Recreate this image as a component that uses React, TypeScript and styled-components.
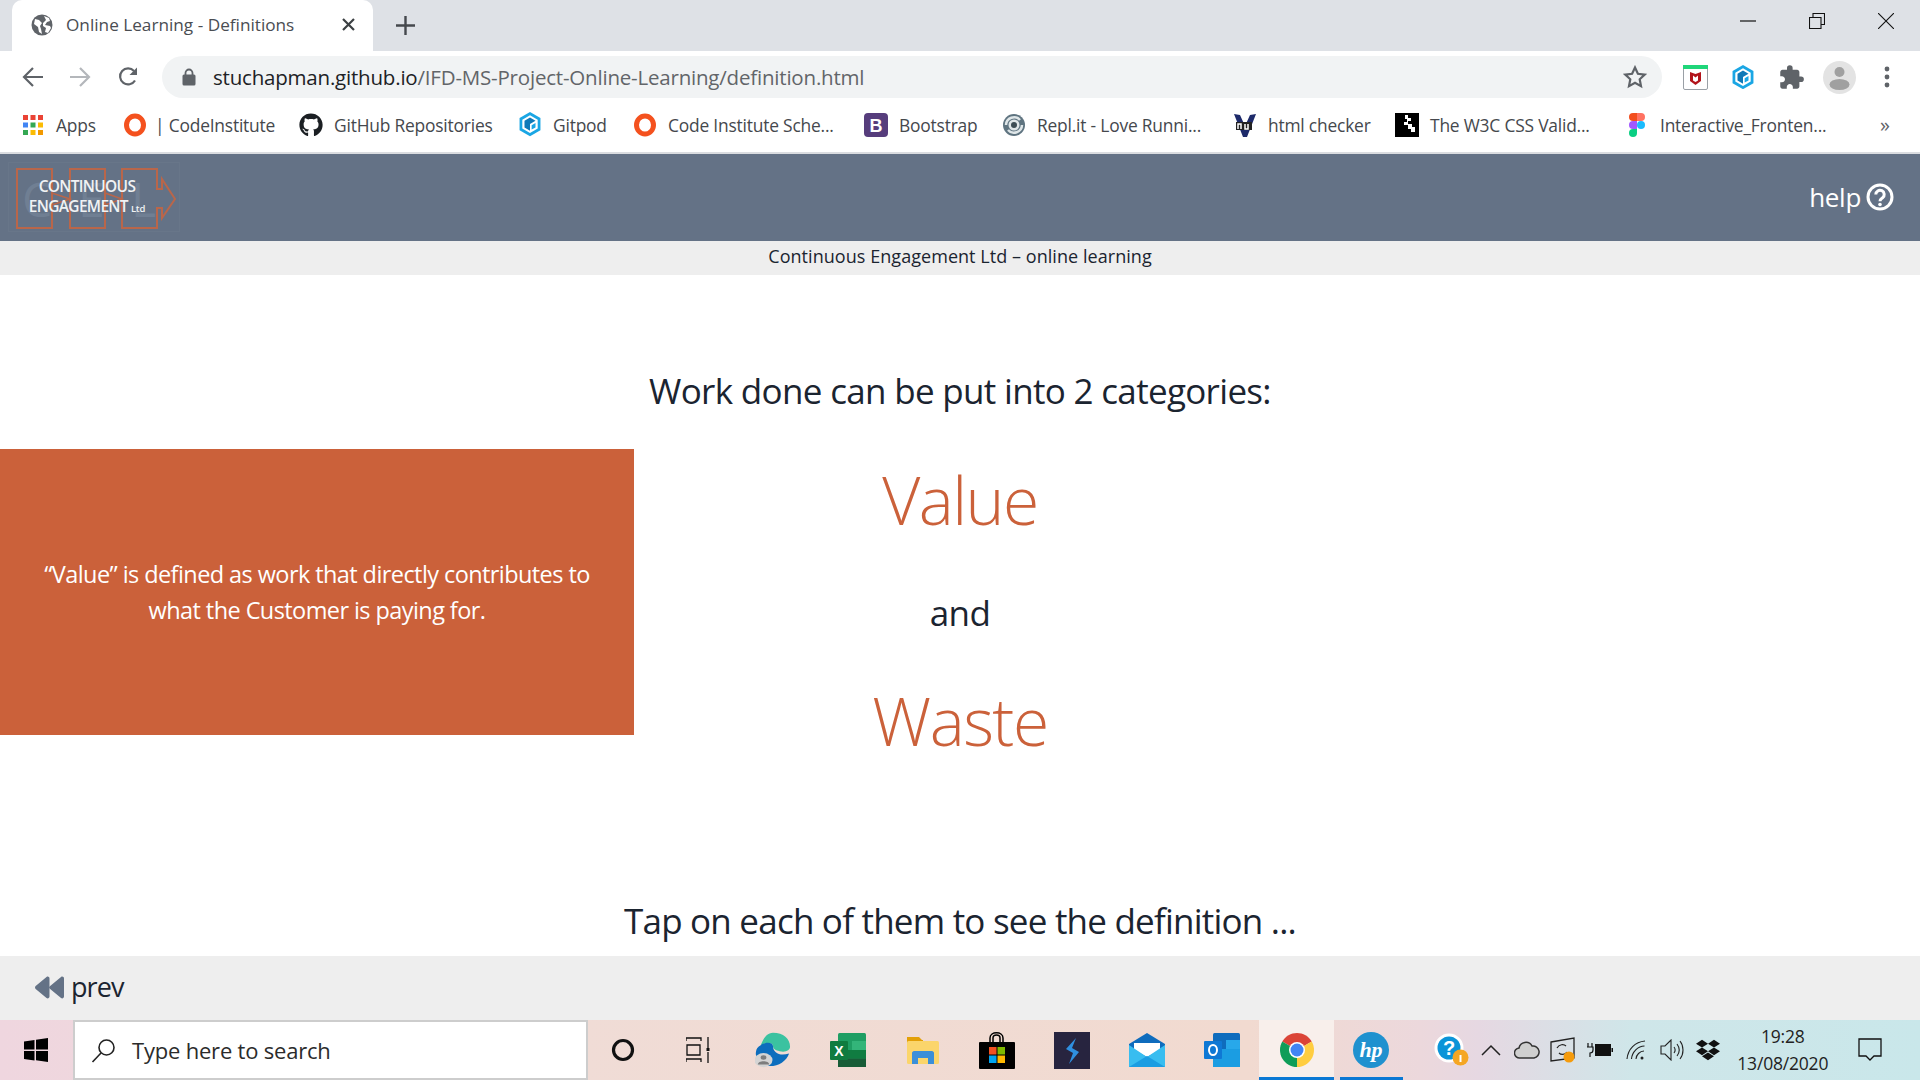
import React from 'react';
import styled, { createGlobalStyle } from 'styled-components';
import { FaGithub, FaBackward, FaDropbox } from 'react-icons/fa';
import { MdExtension } from 'react-icons/md';

const GlobalStyle = createGlobalStyle`
  html, body { margin: 0; padding: 0; overflow: hidden; background: #fff; }
  * { box-sizing: border-box; }
  svg { flex: none; }
`;

const Screen = styled.div`
  width: 1920px;
  height: 1080px;
  display: flex;
  flex-direction: column;
  font-family: 'Open Sans', 'Liberation Sans', sans-serif;
  color: #1b2430;
`;

const TabStrip = styled.div`
  height: 51px;
  flex: none;
  display: flex;
  background: #dee1e6;
  padding-left: 12px;
`;

const Tab = styled.div`
  width: 361px;
  height: 51px;
  background: #fff;
  border-radius: 10px 10px 0 0;
  display: flex;
  align-items: center;
  padding: 0 18px 2px 19px;
  font-size: 17.2px;
  color: #4a4d52;
`;

const TabTitle = styled.span`
  margin-left: 13px;
  flex: 1;
`;

const NewTab = styled.div`
  width: 64px;
  display: flex;
  align-items: center;
  justify-content: center;
  color: #45484d;
`;

const WindowButtons = styled.div`
  margin-left: auto;
  display: flex;
  height: 51px;
`;

const WindowButton = styled.div`
  width: 69px;
  display: flex;
  align-items: center;
  justify-content: center;
  padding-bottom: 9px;
`;

const Toolbar = styled.div`
  height: 52px;
  flex: none;
  display: flex;
  align-items: center;
  background: #fff;
  padding-left: 8px;
`;

const NavButton = styled.div`
  width: 48px;
  display: flex;
  justify-content: center;
`;

const Omnibox = styled.div`
  width: 1500px;
  height: 42px;
  margin-left: 10px;
  border-radius: 21px;
  background: #f1f3f4;
  display: flex;
  align-items: center;
  padding: 0 15px 0 20px;
`;

const Url = styled.div`
  margin-left: 17px;
  flex: 1;
  font-size: 20.5px;
  letter-spacing: -0.2px;
  color: #626569;
  white-space: nowrap;
  b { font-weight: 400; color: #202124; }
`;

const Extensions = styled.div`
  display: flex;
  align-items: center;
  padding-left: 9px;
`;

const Extension = styled.div`
  width: 48px;
  display: flex;
  justify-content: center;
  color: #5f6368;
`;

const Bookmarks = styled.div`
  height: 51px;
  flex: none;
  display: flex;
  align-items: center;
  background: #fff;
  padding: 0 0 6px 23px;
  border-bottom: 2px solid #dadce0;
`;

const Bookmark = styled.div<{ $w: number; $gap: number }>`
  width: ${({ $w }) => $w}px;
  flex: none;
  display: flex;
  align-items: center;
  gap: ${({ $gap }) => $gap}px;
  font-size: 17.4px;
  letter-spacing: -0.2px;
  color: #45484d;
  white-space: nowrap;
`;

const FavSlot = styled.span`
  width: 20px;
  height: 24px;
  display: flex;
  align-items: center;
  justify-content: center;
  flex: none;
`;

const MoreBookmarks = styled.span`
  margin-left: auto;
  margin-right: 30px;
  font-size: 20px;
  color: #5f6368;
`;

const Header = styled.header`
  height: 87px;
  flex: none;
  display: flex;
  align-items: center;
  justify-content: space-between;
  background: #647286;
  padding: 0 26px 0 8px;
`;

const Logo = styled.div`
  position: relative;
  width: 172px;
  height: 70px;
  margin-top: -1px;
  border: 1px solid #687689;
`;

const LogoLines = styled.div`
  position: absolute;
  inset: 0;
  display: flex;
  flex-direction: column;
  align-items: center;
  justify-content: center;
  padding-right: 14px;
  color: #f0f2f4;
  font-size: 15.5px;
  line-height: 20px;
  font-weight: 600;
  letter-spacing: -0.7px;
  white-space: nowrap;
  small { font-size: 9.5px; letter-spacing: -0.2px; margin-left: 3px; }
`;

const Help = styled.div`
  display: flex;
  align-items: center;
  gap: 5px;
  padding-bottom: 2px;
  color: #fff;
  font-size: 26px;
  letter-spacing: -0.3px;
`;

const SubHeader = styled.div`
  height: 34px;
  flex: none;
  background: #eeeeee;
  text-align: center;
  font-size: 18px;
  line-height: 31px;
  letter-spacing: 0.05px;
`;

const Main = styled.main`
  flex: 1;
  background: #fff;
  padding-top: 90px;
  display: flex;
  flex-direction: column;
`;

const Lead = styled.div`
  text-align: center;
  font-size: 35px;
  line-height: 52px;
  letter-spacing: -0.68px;
`;

const DefinitionRow = styled.div`
  margin-top: 32px;
  display: grid;
  grid-template-columns: 634px 1fr 634px;
  align-items: start;
`;

const DefinitionPanel = styled.div`
  height: 286px;
  background: #cb613a;
  color: #fff;
  display: flex;
  align-items: center;
  justify-content: center;
  text-align: center;
  padding: 0 30px 1px;
  font-size: 23.5px;
  line-height: 36px;
  letter-spacing: -0.58px;
`;

const Terms = styled.div`
  display: flex;
  flex-direction: column;
  align-items: center;
  padding-top: 2px;
`;

const Term = styled.div`
  font-size: 66px;
  line-height: 96px;
  font-weight: 350;
  letter-spacing: -1.5px;
  color: #cb613a;
`;

const Joiner = styled.div`
  font-size: 35px;
  line-height: 52px;
  letter-spacing: -0.6px;
  margin: 40px 0 33px;
`;

const Prompt = styled(Lead)`
  margin-top: 127px;
  letter-spacing: -0.78px;
`;

const Footer = styled.footer`
  height: 64px;
  flex: none;
  background: #eeeeee;
  display: flex;
  align-items: center;
  gap: 7px;
  padding: 0 0 2px 35px;
  font-size: 27px;
  letter-spacing: -0.9px;
  color: #647286;
  span { color: #1b2430; padding-bottom: 2px; }
`;

const Taskbar = styled.div`
  height: 60px;
  flex: none;
  display: flex;
  align-items: center;
  background: linear-gradient(90deg, #efd6df 0%, #f0dcd6 30%, #f1dad0 65%, #ecd8dc 74%, #e6d8e2 77%, #cfe6e9 85%, #c9e7ea 100%);
`;

const StartButton = styled.div`
  width: 73px;
  flex: none;
  display: flex;
  justify-content: center;
  padding-right: 2px;
`;

const SearchBox = styled.div`
  width: 515px;
  height: 60px;
  flex: none;
  background: #fff;
  border: 2px solid #cdcdcd;
  display: flex;
  align-items: center;
  padding-left: 16px;
  gap: 16px;
  font-size: 22px;
  letter-spacing: -0.2px;
  color: #2b2b2b;
`;

const TaskApps = styled.div`
  display: flex;
  flex: none;
  margin-left: -2px;
`;

const TaskSlot = styled.div<{ $active?: boolean; $open?: boolean; $inset: number }>`
  position: relative;
  width: 74.8px;
  height: 60px;
  flex: none;
  display: flex;
  align-items: center;
  justify-content: center;
  background: ${({ $active }) => ($active ? '#f8efeb' : 'transparent')};

  &::after {
    content: '';
    position: absolute;
    left: ${({ $inset }) => $inset}px;
    right: ${({ $inset }) => $inset}px;
    bottom: 0;
    height: 3px;
    background: ${({ $open }) => ($open ? '#0a78d4' : 'transparent')};
  }
`;

const Tray = styled.div`
  flex: 1;
  height: 60px;
  padding-left: 22px;
  display: flex;
  align-items: center;
`;

const TraySlot = styled.div<{ $w: number }>`
  width: ${({ $w }) => $w}px;
  flex: none;
  display: flex;
  justify-content: center;
`;

const Clock = styled.div`
  width: 114px;
  flex: none;
  text-align: center;
  font-size: 17.5px;
  line-height: 27px;
  letter-spacing: -0.2px;
  color: #222;
`;

/* browser icons */
const Globe = () => (
  <svg width="22" height="22" viewBox="0 0 22 22">
    <circle cx="11" cy="11" r="10.5" fill="#5f6368" />
    <path d="M4 5l4 1 3 3-2 3 1 3 1 5-3-2-1-5-4-3zM13 2l5 2 1 3-3 1-2 3 5 1 1 2-3 5-3-1 1-4-3-2 0-3 3-3z" fill="#fff" />
  </svg>
);

const CloseX = () => (
  <svg width="13" height="13" viewBox="0 0 13 13">
    <path d="M1 1l11 11M12 1L1 12" stroke="#3c4043" strokeWidth="2.2" />
  </svg>
);

const Plus = () => (
  <svg width="19" height="19" viewBox="0 0 19 19">
    <path d="M9.5 0v19M0 9.5h19" stroke="currentColor" strokeWidth="2.4" />
  </svg>
);

const BackArrow = () => (
  <svg width="21" height="20" viewBox="0 0 21 20" fill="none" stroke="#5f6368" strokeWidth="2.2">
    <path d="M21 10H2M11 1l-9 9 9 9" />
  </svg>
);

const ForwardArrow = () => (
  <svg width="21" height="20" viewBox="0 0 21 20" fill="none" stroke="#b4b7bb" strokeWidth="2.2">
    <path d="M0 10h19M10 1l9 9-9 9" />
  </svg>
);

const Reload = () => (
  <svg width="22" height="22" viewBox="0 0 22 22" fill="none">
    <path d="M18 14.5A8 8 0 1 1 17 5" stroke="#5f6368" strokeWidth="2.2" />
    <path d="M20 1.5V9h-7.5z" fill="#5f6368" />
  </svg>
);

const Lock = () => (
  <svg width="14" height="18" viewBox="0 0 14 18">
    <path d="M3.5 7V5a3.5 3.5 0 0 1 7 0v2" fill="none" stroke="#5f6368" strokeWidth="1.8" />
    <rect x="0.5" y="6.5" width="13" height="11" rx="1.5" fill="#5f6368" />
  </svg>
);

const Star = () => (
  <svg width="24" height="24" viewBox="0 0 24 24" fill="none" stroke="#5f6368" strokeWidth="2.2">
    <path d="M12 2.5l2.9 6.3 6.8.8-5 4.7 1.3 6.8-6-3.4-6 3.4 1.3-6.8-5-4.7 6.8-.8z" />
  </svg>
);

const McAfee = () => (
  <svg width="25" height="25" viewBox="0 0 25 25">
    <rect x="0.5" y="0.5" width="24" height="24" rx="1.5" fill="#fff" stroke="#9aa0a6" />
    <rect width="25" height="4" fill="#1fd67a" />
    <path d="M7 7l5.5 2L18 7v9l-5.5 4L7 16z" fill="#b3141b" />
    <path d="M10 10.5l2.5 2 2.5-2v5l-2.5 1.5-2.5-1.5z" fill="#fff" />
  </svg>
);

const Gitpod = ({ size = 22 }: { size?: number }) => (
  <svg width={size} height={size * 1.1} viewBox="0 0 20 22">
    <path d="M10 0l9.5 5.5v11L10 22 .5 16.5v-11z" fill="#1aa6e4" />
    <path d="M10 3l7 4v8l-7 4-7-4V7z" fill="#fff" />
    <path d="M10 5l5 3-5 3v6l-5-3V8z" fill="#0f79b8" />
    <path d="M11.5 12l3.5-2v4l-3.5 2z" fill="#1aa6e4" />
  </svg>
);

const Avatar = () => (
  <svg width="33" height="33" viewBox="0 0 33 33">
    <circle cx="16.5" cy="16.5" r="16.5" fill="#e3e3e3" />
    <circle cx="16.5" cy="11" r="5" fill="#a0a0a0" />
    <ellipse cx="16.5" cy="23.5" rx="10" ry="5.5" fill="#a0a0a0" />
  </svg>
);

const Dots = () => (
  <svg width="6" height="22" viewBox="0 0 6 22" fill="#5f6368">
    <circle cx="3" cy="3" r="2.4" />
    <circle cx="3" cy="11" r="2.4" />
    <circle cx="3" cy="19" r="2.4" />
  </svg>
);

const AppsGrid = () => {
  const colors = ['#ea4335', '#ea4335', '#ea4335', '#4285f4', '#34a853', '#fbbc04', '#34a853', '#fbbc04', '#f29900'];
  return (
    <svg width="20" height="20" viewBox="0 0 20 20">
      {colors.map((c, i) => (
        <rect key={i} x={(i % 3) * 7.5} y={Math.floor(i / 3) * 7.5} width="5" height="5" fill={c} />
      ))}
    </svg>
  );
};

const CodeInstituteMark = () => (
  <svg width="24" height="24" viewBox="0 0 24 24">
    <ellipse cx="12" cy="12" rx="8.5" ry="9" fill="none" stroke="#f4511e" strokeWidth="5" />
  </svg>
);

const BootstrapMark = () => (
  <svg width="24" height="24" viewBox="0 0 24 24">
    <rect width="24" height="24" rx="4" fill="#563d7c" />
    <text x="12" y="19" textAnchor="middle" fontFamily="Liberation Sans" fontWeight="700" fontSize="18" fill="#fff">B</text>
  </svg>
);

const ReplMark = () => (
  <svg width="24" height="24" viewBox="0 0 24 24" fill="none">
    <circle cx="12" cy="12" r="11" fill="#5f7480" />
    <path d="M4 12a8 8 0 0 1 14-5M20 12a8 8 0 0 1-14 5" stroke="#dfe6e8" strokeWidth="2.5" />
    <circle cx="12" cy="12" r="5.5" fill="#dfe6e8" />
    <circle cx="12" cy="12" r="3" fill="#3d4d55" />
  </svg>
);

const ValidatorMark = () => (
  <svg width="24" height="24" viewBox="0 0 24 24">
    <path d="M1 1l6 1 5 11 5-11 6-1-9 23h-4z" fill="#1d2a6a" />
    <rect x="3" y="9" width="16" height="8" fill="#222" />
    <path d="M5 16v-5h3v5M12 11v5h3v-5" fill="none" stroke="#fff" strokeWidth="1.5" />
  </svg>
);

const W3cMark = () => (
  <svg width="24" height="24" viewBox="0 0 24 24">
    <rect width="24" height="24" fill="#000" />
    <path d="M10 2h3v3h3v3h-3v3h4v3h3v5h-4v-3h-3v-4H9V9h3V6h-2z" fill="#fff" />
  </svg>
);

const FigmaMark = () => (
  <svg width="16" height="24" viewBox="0 0 16 24">
    <path d="M8 0H4a4 4 0 0 0 0 8h4z" fill="#f24e1e" />
    <path d="M8 0h4a4 4 0 0 1 0 8H8z" fill="#ff7262" />
    <path d="M8 8H4a4 4 0 0 0 0 8h4z" fill="#a259ff" />
    <circle cx="12" cy="12" r="4" fill="#1abcfe" />
    <path d="M8 16H4a4 4 0 1 0 4 4z" fill="#0acf83" />
  </svg>
);

const LogoDrawing = () => (
  <svg width="170" height="68" viewBox="0 0 170 68" style={{ display: 'block' }}>
    <g fontFamily="Open Sans" fontSize="48" fill="#707f93">
      <text x="13" y="54">C</text>
      <text x="69" y="54">E</text>
      <text x="122" y="54">L</text>
    </g>
    <g fill="none" stroke="#b9664a" strokeWidth="2">
      <rect x="8" y="6" width="35" height="59" />
      <rect x="61" y="6" width="35" height="59" />
      <path d="M113 6h35v20h5v-10l13 20-13 19v-10h-5v20h-35z" />
      <path d="M43 30l18 6-18 6M96 30l17 6-17 6" strokeWidth="1.5" />
    </g>
  </svg>
);

const HelpIcon = () => (
  <svg width="28" height="28" viewBox="0 0 28 28" fill="none" stroke="#fff">
    <circle cx="14" cy="14" r="12" strokeWidth="3" />
    <path d="M9.8 11.500a4.200 4.200 0 1 1 6.800 3.300c-1.700 1.200-2.600 1.700-2.600 3.400" strokeWidth="3" />
    <circle cx="14" cy="21.500" r="1.800" fill="#fff" stroke="none" />
  </svg>
);

/* taskbar icons */
const WindowsLogo = () => (
  <svg width="24" height="24" viewBox="0 0 24 24" fill="#000">
    <path d="M0 3.5L10.5 2v9.5H0zM12 1.800L24 0v11.500H12zM0 13h10.500v9.500L0 21zM12 13h12v11l-12-1.800z" />
  </svg>
);

const SearchGlass = () => (
  <svg width="25" height="25" viewBox="0 0 25 25" fill="none" stroke="#222" strokeWidth="1.6">
    <circle cx="15.5" cy="9.5" r="7.5" />
    <path d="M10 15L1.5 24" />
  </svg>
);

const Cortana = () => (
  <svg width="24" height="24" viewBox="0 0 24 24">
    <circle cx="12" cy="12" r="9.5" fill="none" stroke="#111" strokeWidth="3.2" />
  </svg>
);

const TaskView = () => (
  <svg width="24" height="26" viewBox="0 0 24 26" fill="none" stroke="#111" strokeWidth="1.3">
    <path d="M0 1h15v3M0 1v3M15 25v-3H0v3M1 8h13v10H1zM22 0v11M22 15v11" />
    <rect x="20.5" y="11" width="3" height="3" fill="#111" stroke="none" />
  </svg>
);

const Edge = () => (
  <svg width="36" height="37" viewBox="0 0 38 50" preserveAspectRatio="none">
    <path d="M19 1c11 0 18 8 18 19 0 5-5 8-11 6-4-1-7-3-7-7 0-5-7-6-13-1C9 8 13 1 19 1z" fill="#3bc2a0" />
    <path d="M6 18c4-5 13-5 13 1 0 10 8 14 17 10-3 11-12 18-22 17C4 45 0 34 1 27c.3-4 2-7 5-9z" fill="#0c6dbd" />
    <circle cx="9" cy="38" r="9.5" fill="#d4d4d4" />
    <circle cx="9" cy="34.5" r="3" fill="#7d7d7d" />
    <path d="M3 44c0-6 12-6 12 0z" fill="#7d7d7d" />
  </svg>
);

const Excel = () => (
  <svg width="36" height="34" viewBox="0 0 36 34">
    <rect x="8" y="0" width="28" height="34" rx="1.5" fill="#1f9e63" />
    <rect x="22" y="8" width="14" height="9" fill="#33b579" />
    <rect x="8" y="17" width="28" height="8.5" fill="#107c41" />
    <rect x="8" y="25.5" width="28" height="8.5" fill="#185c37" />
    <rect y="8" width="18" height="19" rx="1" fill="#0f7b3f" />
    <text x="9" y="23" textAnchor="middle" fontFamily="Liberation Sans" fontWeight="700" fontSize="14" fill="#fff">X</text>
  </svg>
);

const Folder = () => (
  <svg width="32" height="28" viewBox="0 0 32 28">
    <path d="M0 1h12l3 3h1v6H0z" fill="#e3a008" />
    <rect y="5" width="32" height="23" rx="1.5" fill="#fbd56b" />
    <path d="M5 28V17c0-1 1-2 2-2h18c1 0 2 1 2 2v11h-6v-6H11v6z" fill="#3b8fd9" />
  </svg>
);

const Store = () => (
  <svg width="36" height="37" viewBox="0 0 36 37">
    <path d="M11 10V6c0-7 13-7 13 0v4M14 10V6c0-4 7-4 7 0v4" fill="none" stroke="#000" strokeWidth="1.5" />
    <rect y="10" width="36" height="27" rx="1" fill="#000" />
    <rect x="10" y="15" width="7.5" height="7.5" fill="#f25022" />
    <rect x="18.5" y="15" width="7.5" height="7.5" fill="#7fba00" />
    <rect x="10" y="23.5" width="7.5" height="7.5" fill="#00a4ef" />
    <rect x="18.5" y="23.5" width="7.5" height="7.5" fill="#ffb900" />
  </svg>
);

const DarkApp = () => (
  <svg width="36" height="37" viewBox="0 0 36 37">
    <rect width="36" height="37" fill="#27243f" />
    <path d="M22 6L12 17l7 4-4 11 10-12-7-4z" fill="#2f8fe0" />
  </svg>
);

const Mail = () => (
  <svg width="36" height="34" viewBox="0 0 36 34">
    <path d="M18 0l18 11v23H0V11z" fill="#0f6cbd" />
    <path d="M5 10h26v7l-13 7-13-7z" fill="#fff" />
    <path d="M0 12l18 12 18-12v22H0z" fill="#38bdf0" />
    <path d="M0 34l18-11 18 11z" fill="#1b9de2" />
  </svg>
);

const Outlook = () => (
  <svg width="36" height="34" viewBox="0 0 36 34">
    <rect x="9" y="0" width="27" height="34" rx="1.5" fill="#0f6cbd" />
    <rect x="22" y="7" width="14" height="9" fill="#28a8ea" />
    <path d="M9 16h27v18H9z" fill="#1b9de2" />
    <rect y="8" width="18" height="18" rx="1" fill="#0f78d4" />
    <ellipse cx="9" cy="17" rx="4" ry="5" fill="none" stroke="#fff" strokeWidth="2" />
  </svg>
);

const Chrome = () => (
  <svg width="34" height="34" viewBox="0 0 34 34">
    <path d="M17 17L2.28 8.5A17 17 0 0 1 31.72 8.5z" fill="#db4437" />
    <path d="M17 17L31.72 8.5A17 17 0 0 1 17 34z" fill="#ffcd40" />
    <path d="M17 17V34A17 17 0 0 1 2.28 8.5z" fill="#0f9d58" />
    <circle cx="17" cy="17" r="8" fill="#fff" />
    <circle cx="17" cy="17" r="6.5" fill="#4285f4" />
  </svg>
);

const HpLogo = () => (
  <svg width="36" height="36" viewBox="0 0 36 36">
    <circle cx="18" cy="18" r="18" fill="#1f91cf" />
    <text x="18" y="25" textAnchor="middle" fontFamily="Liberation Serif" fontStyle="italic" fontWeight="700" fontSize="22" fill="#fff">hp</text>
  </svg>
);

const HelpBadge = () => (
  <svg width="36" height="34" viewBox="0 0 36 34">
    <circle cx="15" cy="15" r="14.5" fill="#fff" />
    <circle cx="15" cy="15" r="11.5" fill="#0b94d8" />
    <text x="15" y="22" textAnchor="middle" fontFamily="Liberation Sans" fontWeight="700" fontSize="20" fill="#fff">?</text>
    <circle cx="26.5" cy="24.5" r="8" fill="#f5a623" />
    <rect x="25.5" y="22" width="2" height="7" fill="#fff" />
  </svg>
);

const Chevron = () => (
  <svg width="20" height="12" viewBox="0 0 20 12" fill="none" stroke="#222" strokeWidth="1.5">
    <path d="M1 11l9-9 9 9" />
  </svg>
);

const Cloud = () => (
  <svg width="26" height="18" viewBox="0 0 26 18">
    <path d="M6 17a5 5 0 0 1-1-10 7 7 0 0 1 13-2 6 6 0 0 1 2 12z" fill="#cfcfcf" stroke="#333" strokeWidth="1.5" />
  </svg>
);

const SyncScreen = () => (
  <svg width="26" height="26" viewBox="0 0 26 26">
    <path d="M1 5l23-4v20L1 24z" fill="none" stroke="#222" strokeWidth="1.3" />
    <path d="M7 11c2-4 7-4 9-2M17 15c-2 3-6 3-8 1" fill="none" stroke="#222" strokeWidth="1.2" />
    <circle cx="19" cy="20" r="5.5" fill="#f59b0c" />
  </svg>
);

const Battery = () => (
  <svg width="26" height="16" viewBox="0 0 26 16">
    <path d="M1 1v4M5 1v4M0 5h6v3c0 2-1 3-3 3v4" stroke="#111" strokeWidth="1.2" fill="none" />
    <rect x="8" y="2" width="16" height="12" fill="#111" />
    <rect x="24.5" y="6" width="1.5" height="4" fill="#111" />
  </svg>
);

const Wifi = () => (
  <svg width="20" height="20" viewBox="0 0 20 20" fill="none" stroke="#222" strokeWidth="1.1">
    <path d="M1 19C2 9 9 2 19 1M5.5 19C6 12 12 6 18.5 6M10 19c0-4 4-8 8-8" />
    <circle cx="16" cy="18" r="1.5" fill="#222" stroke="none" />
  </svg>
);

const Speaker = () => (
  <svg width="24" height="22" viewBox="0 0 24 22" fill="none" stroke="#222" strokeWidth="1.1">
    <path d="M1 7h4l6-6v20l-6-6H1zM14 8c1.5 2 1.5 4 0 6M17 5c3 4 3 8 0 12M20 2c4 5 4 13 0 18" />
  </svg>
);

const ActionCenter = () => (
  <svg width="24" height="24" viewBox="0 0 24 24" fill="none" stroke="#111" strokeWidth="1.3">
    <path d="M1 1h22v17h-7l-4 4-4-4H1z" />
  </svg>
);

const bookmarks: { w: number; gap?: number; icon: React.ReactNode; label: string }[] = [
  { w: 102, icon: <AppsGrid />, label: 'Apps' },
  { w: 176, gap: 10, icon: <CodeInstituteMark />, label: '| CodeInstitute' },
  { w: 219, icon: <FaGithub size={24} color="#1b1f23" />, label: 'GitHub Repositories' },
  { w: 115, icon: <Gitpod />, label: 'Gitpod' },
  { w: 231, icon: <CodeInstituteMark />, label: 'Code Institute Sche...' },
  { w: 138, icon: <BootstrapMark />, label: 'Bootstrap' },
  { w: 231, icon: <ReplMark />, label: 'Repl.it - Love Runni...' },
  { w: 162, icon: <ValidatorMark />, label: 'html checker' },
  { w: 230, icon: <W3cMark />, label: 'The W3C CSS Valid...' },
  { w: 200, icon: <FigmaMark />, label: 'Interactive_Fronten...' },
];

const taskApps: { icon: React.ReactNode; active?: boolean; open?: boolean; inset?: number }[] = [
  { icon: <Cortana /> },
  { icon: <TaskView /> },
  { icon: <Edge /> },
  { icon: <Excel /> },
  { icon: <Folder /> },
  { icon: <Store /> },
  { icon: <DarkApp /> },
  { icon: <Mail /> },
  { icon: <Outlook /> },
  { icon: <Chrome />, active: true, open: true },
  { icon: <HpLogo />, open: true, inset: 6 },
];

const App = () => {
  return (
    <Screen>
      <GlobalStyle />
      <TabStrip>
        <Tab>
          <Globe />
          <TabTitle>Online Learning - Definitions</TabTitle>
          <CloseX />
        </Tab>
        <NewTab>
          <Plus />
        </NewTab>
        <WindowButtons>
          <WindowButton>
            <svg width="16" height="2" viewBox="0 0 16 2"><path d="M0 1h16" stroke="#111" strokeWidth="1.2" /></svg>
          </WindowButton>
          <WindowButton>
            <svg width="16" height="16" viewBox="0 0 16 16" fill="none" stroke="#111" strokeWidth="1.1"><path d="M.5 4.5H12v11H.5zM4 4.500V.5h11.500v11H12" /></svg>
          </WindowButton>
          <WindowButton>
            <svg width="16" height="16" viewBox="0 0 16 16" fill="none" stroke="#111" strokeWidth="1.1"><path d="M0 0l16 16M16 0L0 16" /></svg>
          </WindowButton>
        </WindowButtons>
      </TabStrip>

      <Toolbar>
        <NavButton><BackArrow /></NavButton>
        <NavButton><ForwardArrow /></NavButton>
        <NavButton><Reload /></NavButton>
        <Omnibox>
          <Lock />
          <Url><b>stuchapman.github.io</b>/IFD-MS-Project-Online-Learning/definition.html</Url>
          <Star />
        </Omnibox>
        <Extensions>
          <Extension><McAfee /></Extension>
          <Extension><Gitpod /></Extension>
          <Extension><MdExtension size={27} /></Extension>
          <Extension><Avatar /></Extension>
          <Extension><Dots /></Extension>
        </Extensions>
      </Toolbar>

      <Bookmarks>
        {bookmarks.map((b) => (
          <Bookmark key={b.label} $w={b.w} $gap={b.gap ?? 13}>
            <FavSlot>{b.icon}</FavSlot>
            {b.label}
          </Bookmark>
        ))}
        <MoreBookmarks>»</MoreBookmarks>
      </Bookmarks>

      <Header>
        <Logo>
          <LogoDrawing />
          <LogoLines>
            <span>CONTINUOUS</span>
            <span>ENGAGEMENT<small>Ltd</small></span>
          </LogoLines>
        </Logo>
        <Help>
          help
          <HelpIcon />
        </Help>
      </Header>

      <SubHeader>Continuous Engagement Ltd – online learning</SubHeader>

      <Main>
        <Lead>Work done can be put into 2 categories:</Lead>
        <DefinitionRow>
          <DefinitionPanel>
            “Value” is defined as work that directly contributes to what the Customer is paying for.
          </DefinitionPanel>
          <Terms>
            <Term>Value</Term>
            <Joiner>and</Joiner>
            <Term>Waste</Term>
          </Terms>
        </DefinitionRow>
        <Prompt>Tap on each of them to see the definition ...</Prompt>
      </Main>

      <Footer>
        <FaBackward size={29} />
        <span>prev</span>
      </Footer>

      <Taskbar>
        <StartButton><WindowsLogo /></StartButton>
        <SearchBox>
          <SearchGlass />
          Type here to search
        </SearchBox>
        <TaskApps>
          {taskApps.map((app, i) => (
            <TaskSlot key={i} $active={app.active} $open={app.open} $inset={app.inset ?? 0}>
              {app.icon}
            </TaskSlot>
          ))}
        </TaskApps>
        <Tray>
          <TraySlot $w={42}><HelpBadge /></TraySlot>
          <TraySlot $w={36}><Chevron /></TraySlot>
          <TraySlot $w={36}><Cloud /></TraySlot>
          <TraySlot $w={37}><SyncScreen /></TraySlot>
          <TraySlot $w={36}><Battery /></TraySlot>
          <TraySlot $w={37}><Wifi /></TraySlot>
          <TraySlot $w={35}><Speaker /></TraySlot>
          <TraySlot $w={36}><FaDropbox size={24} color="#111" /></TraySlot>
          <Clock>19:28<br />13/08/2020</Clock>
          <TraySlot $w={60}><ActionCenter /></TraySlot>
        </Tray>
      </Taskbar>
    </Screen>
  );
};

export default App;
